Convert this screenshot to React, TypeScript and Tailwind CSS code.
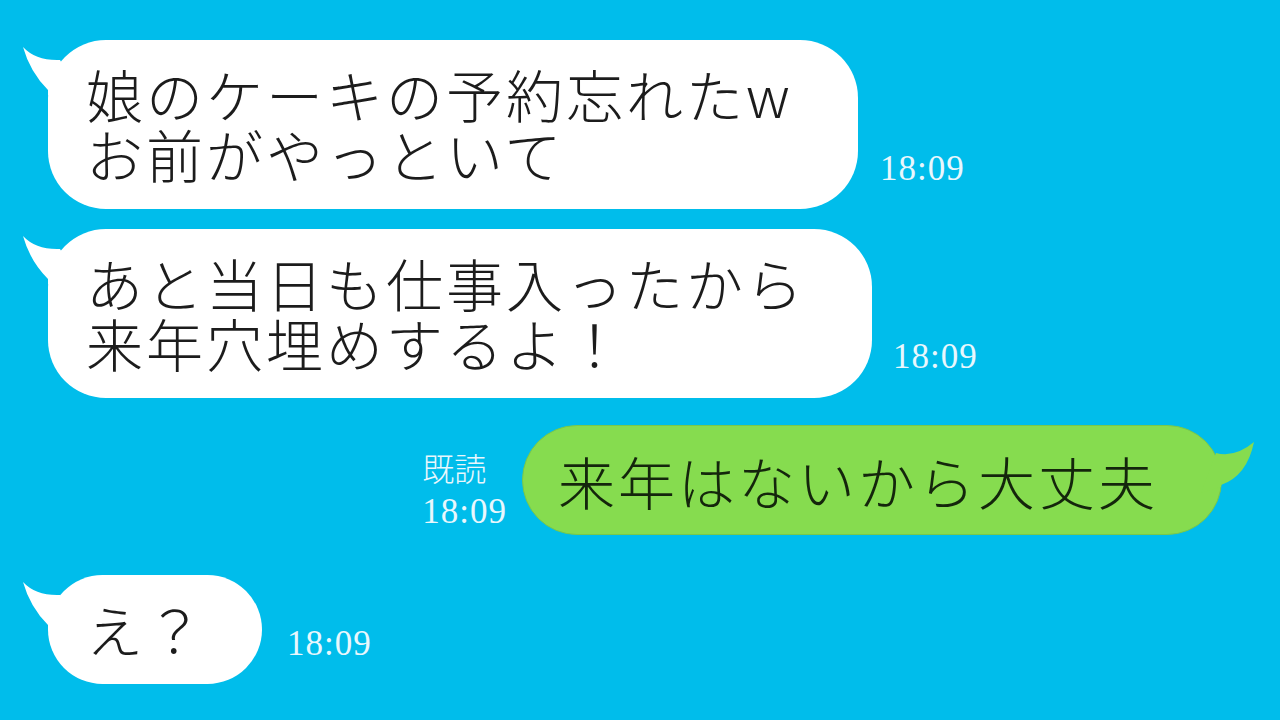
const jp = { fontFamily: '"Noto Sans CJK JP", "Noto Sans", sans-serif' };
const serif = { fontFamily: '"Liberation Serif", "Noto Sans CJK JP", serif' };

const LeftTail = () => (
  <svg
    className="absolute left-[-28px] top-0"
    width="70"
    height="60"
    viewBox="0 0 70 60"
  >
    <path d="M3 7 Q 16 21, 40 20 L 62 58 L 28 55 L 28 50 Q 10 32, 3 7 Z" fill="#ffffff" />
  </svg>
);

const RightTail = () => (
  <svg
    className="absolute right-[-48px] top-[9px]"
    width="70"
    height="60"
    viewBox="0 0 70 60"
  >
    <path d="M55 7 Q 36 23, 17 18 L 2 58 L 22 52 L 22 50 Q 48 41, 55 7 Z" fill="#86dc4f" />
  </svg>
);

const Stamp = ({ children, className }: { children: React.ReactNode; className?: string }) => (
  <div
    className={"text-[35px] leading-[40px] tracking-[1px] text-[#e9f7fd] " + (className ?? "")}
    style={serif}
  >
    {children}
  </div>
);

const Incoming = ({
  lines,
  width,
  stamp,
}: {
  lines: string[];
  width: string;
  stamp: React.ReactNode;
}) => (
  <div className="flex items-end">
    <div
      className={"relative rounded-[58px] bg-white pl-[38px] pt-[23px] pb-[26px] text-[57px] leading-[60px] font-light tracking-[3px] text-[#1c1c1c] " + width}
      style={jp}
    >
      <LeftTail />
      {lines.map((l) => (
        <div key={l} className="relative whitespace-nowrap">
          {l}
        </div>
      ))}
    </div>
    {stamp}
  </div>
);

export default function App() {
  return (
    <div className="flex h-[720px] w-[1280px] flex-col overflow-hidden bg-[#00bdeb] pl-[48px] pt-[40px]">
      <Incoming
        lines={["娘のケーキの予約忘れたw", "お前がやっといて"]}
        width="w-[810px]"
        stamp={<Stamp className="mb-[20px] ml-[22px]">18:09</Stamp>}
      />
      <div className="mt-[20px]">
        <Incoming
          lines={["あと当日も仕事入ったから", "来年穴埋めするよ！"]}
          width="w-[824px]"
          stamp={<Stamp className="mb-[21px] ml-[21px]">18:09</Stamp>}
        />
      </div>

      <div className="mt-[27px] flex items-end justify-end pr-[58px]">
        <div className="mb-[2px] mr-[15px] flex flex-col">
          <div className="text-[32px] leading-[42px] font-light text-[#e9f7fd]" style={serif}>
            既読
          </div>
          <Stamp className="leading-[42px]">18:09</Stamp>
        </div>
        <div
          className="relative h-[110px] w-[700px] rounded-[55px] border border-[#78c84a] bg-[#86dc4f] pl-[35px] pt-[24px] text-[57px] leading-[60px] font-light tracking-[3px] text-[#14260c]"
          style={jp}
        >
          <RightTail />
          <div className="relative whitespace-nowrap">来年はないから大丈夫</div>
        </div>
      </div>

      <div className="mt-[40px]">
        <Incoming
          lines={["え？"]}
          width="w-[214px]"
          stamp={<Stamp className="mb-[20px] ml-[25px]">18:09</Stamp>}
        />
      </div>
    </div>
  );
}
